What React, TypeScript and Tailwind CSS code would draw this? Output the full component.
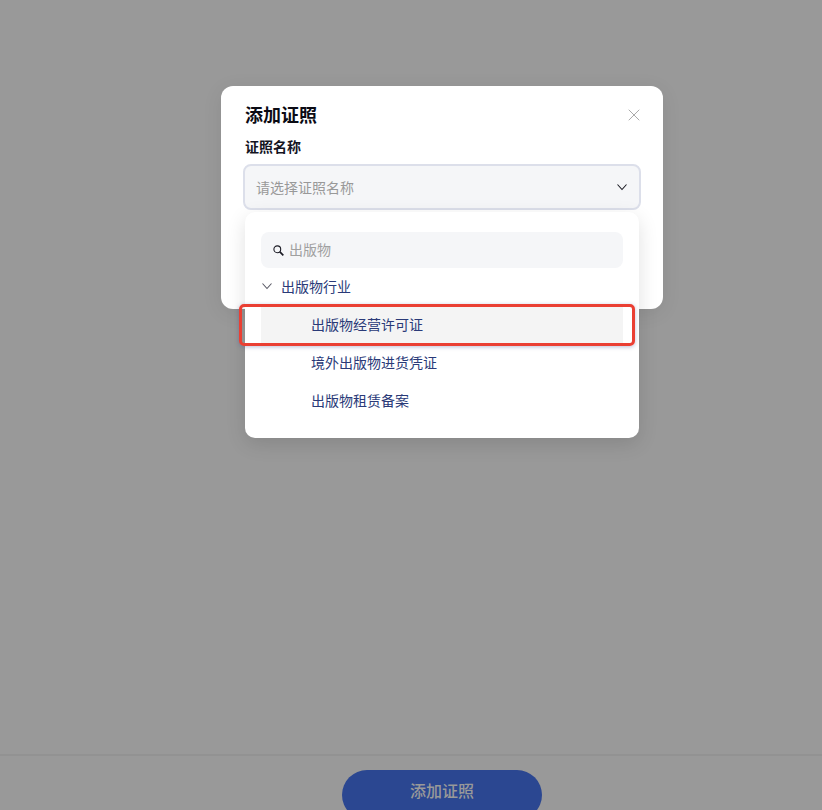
import { X } from 'lucide-react';

const items = ['出版物经营许可证', '境外出版物进货凭证', '出版物租赁备案'];

function Chevron({ className }: { className: string }) {
  return (
    <svg width="12" height="8" viewBox="0 0 12 8" fill="none" className={className}>
      <path d="M1.5 1.5l4.5 5 4.5-5" stroke="currentColor" strokeWidth="1.1" />
    </svg>
  );
}

function SearchIcon() {
  return (
    <svg width="11" height="11" viewBox="0 0 11 11" fill="none" className="mt-[2px] text-[#1b1b24]">
      <circle cx="4.3" cy="4.3" r="3.4" stroke="currentColor" strokeWidth="1.1" />
      <path d="M6.9 6.9l3.4 3.4" stroke="currentColor" strokeWidth="1.7" />
    </svg>
  );
}

export default function App() {
  return (
    <div className="relative flex h-[810px] w-[822px] flex-col justify-end overflow-hidden bg-[#999999] font-['Inter','Noto_Sans_CJK_SC',sans-serif]">
      {/* page footer, under the mask */}
      <footer className="flex h-[56px] items-start justify-center border-t-2 border-[#929292] pt-[14px] pl-[62px]">
        <button className="flex h-[50px] w-[200px] shrink-0 items-center justify-center rounded-full bg-[#2b4791] pb-[8px] text-[16px] font-medium text-[#999999]">
          添加证照
        </button>
      </footer>

      {/* modal */}
      <div className="absolute left-[221px] top-[86px] h-[223px] w-[442px] rounded-[12px] bg-white px-[24px] pt-[16px] shadow-[0_4px_20px_rgba(0,0,0,0.08)]">
        <div className="flex h-[26px] items-center justify-between">
          <h2 className="pt-[2px] text-[18px] leading-[26px] font-semibold text-[#0b0b14]">添加证照</h2>
          <X size={20} strokeWidth={1} className="mr-[-5px] text-[#999999]" />
        </div>
        <label className="mt-[9px] block text-[14px] leading-[20px] font-semibold text-[#14141f]">证照名称</label>
        <div className="mx-[-2px] mt-[7px] flex h-[46px] items-center justify-between rounded-[8px] border-2 border-[#dcdfea] bg-[#f5f6f8] pr-[11px] pl-[11px]">
          <span className="text-[14px] text-[#999999]">请选择证照名称</span>
          <Chevron className="text-[#1b1b24]" />
        </div>
      </div>

      {/* dropdown */}
      <div className="absolute left-[245px] top-[212px] h-[226px] w-[394px] rounded-[10px] bg-white px-[16px] pt-[20px] shadow-[0_6px_20px_rgba(0,0,0,0.12)]">
        <div className="flex h-[36px] items-center rounded-[8px] bg-[#f5f6f8] pb-[2px] pl-[12px]">
          <SearchIcon />
          <span className="ml-[5px] text-[14px] text-[#a0a0a0]">出版物</span>
        </div>
        <div className="flex h-[38px] items-center pb-[2px]">
          <Chevron className="text-[#5a5a66]" />
          <span className="ml-[8px] text-[14px] text-[#2a3a78]">出版物行业</span>
        </div>
        <ul className="flex flex-col">
          {items.map((item, i) => (
            <li
              key={item}
              className={`flex h-[38px] items-center pb-[2px] pl-[50px] text-[14px] text-[#2a3a78] ${i === 0 ? 'bg-[#f4f4f4]' : ''}`}
            >
              {item}
            </li>
          ))}
        </ul>
      </div>

      {/* red annotation round the first row */}
      <div className="absolute left-[239px] top-[304px] h-[42px] w-[396px] rounded-[5px] border-[3px] border-[#ea3f33] shadow-[0_1px_4px_rgba(60,70,140,0.35)]" />
    </div>
  );
}
